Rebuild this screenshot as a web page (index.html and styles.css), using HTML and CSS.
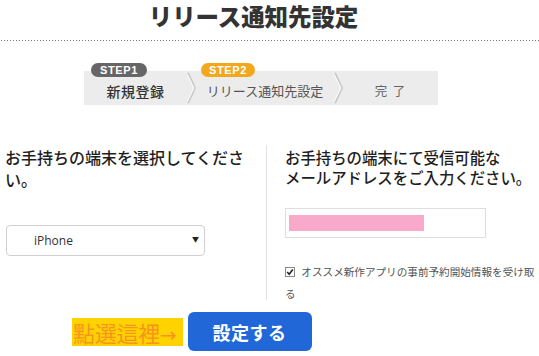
FILE: index.html
```html
<!DOCTYPE html>
<html lang="ja">
<head>
<meta charset="utf-8">
<link rel="stylesheet" href="styles.css">
</head>
<body>
<header class="page-head">
  <h1 class="title">リリース通知先設定</h1>
</header>

<div class="steps">
  <div class="step step-1">
    <span class="badge badge-dark">STEP1</span>
    <span class="step-label">新規登録</span>
  </div>
  <svg class="chev" width="10" height="34" viewBox="0 0 10 34"><polyline points="1,2 8,17 1,32" fill="none" stroke="#c8c8c8" stroke-width="2"/><polyline points="0,3 7,17 0,31" fill="none" stroke="#fff" stroke-width="1"/></svg>
  <div class="step step-2">
    <span class="badge badge-orange">STEP2</span>
    <span class="step-label">リリース通知先設定</span>
  </div>
  <svg class="chev chev-2" width="12" height="34" viewBox="0 0 12 34"><polyline points="2,2 9,17 2,32" fill="none" stroke="#c8c8c8" stroke-width="2"/><polyline points="1,3 8,17 1,31" fill="none" stroke="#fff" stroke-width="1"/></svg>
  <div class="step step-3">
    <span class="step-label">完&nbsp;&nbsp;了</span>
  </div>
</div>

<main class="cols">
  <section class="col col-left">
    <h2 class="col-head">お手持ちの端末を選択してください。</h2>
    <div class="select">
      <span class="select-text">iPhone</span>
      <span class="select-arrow">▼</span>
    </div>
  </section>
  <section class="col col-right">
    <h2 class="col-head col-head-right">お手持ちの端末にて受信可能な<br>メールアドレスをご入力ください。</h2>
    <div class="mail-input"><span class="mail-mask"></span></div>
    <p class="opt">
      <svg class="check" width="10" height="10" viewBox="0 0 10 10"><rect x="0.5" y="0.5" width="9" height="9" fill="#fff" stroke="#8a8a8a"/><polyline points="2.2,5 4.2,7.2 7.8,2.6" fill="none" stroke="#222" stroke-width="1.6"/></svg>
      オススメ新作アプリの事前予約開始情報を受け取る
    </p>
  </section>
</main>

<div class="actions">
  <span class="hint">點選這裡<span class="hint-arrow">→</span></span>
  <button class="submit">設定する</button>
</div>
</body>
</html>
```

FILE: styles.css
```css
html, body {
  margin: 0;
  padding: 0;
  background: #fff;
}

body {
  width: 539px;
  height: 356px;
  overflow: hidden;
  font-family: "Noto Sans CJK JP", "Noto Sans", sans-serif;
  color: #222;
}

.page-head {
  height: 40px;
  background-image: linear-gradient(to right, #777 0, #777 1px, transparent 1px);
  background-size: 3px 1px;
  background-repeat: repeat-x;
  background-position: 1px 40px;
  padding-bottom: 1px;
}

.title {
  margin: 0;
  text-align: center;
  font-size: 23.5px;
  line-height: 32px;
  font-weight: 900;
  color: #333;
  padding-right: 32px;
  letter-spacing: -0.1px;
}

.steps {
  margin: 30px 0 0 84px;
  width: 354px;
  height: 34px;
  display: flex;
  background: #ececec;
}

.step {
  position: relative;
  display: flex;
  align-items: center;
  justify-content: center;
  padding-top: 5px;
  box-sizing: border-box;
}

.step-1 { width: 103px; }
.step-2 { width: 136px; }
.step-3 { width: 93px; }

.chev { flex: none; display: block; }

.step-label {
  font-size: 13px;
  color: #555;
  white-space: nowrap;
}

.step-1 .step-label {
  font-size: 14px;
  color: #333;
  letter-spacing: 0.5px;
  font-weight: 500;
}

.step-3 .step-label {
  color: #666;
  padding-right: 3px;
  font-size: 12.5px;
}

.badge {
  position: absolute;
  top: -8px;
  height: 14px;
  border-radius: 7px;
  color: #fff;
  font-family: "Liberation Sans", Arial, sans-serif;
  font-weight: 700;
  font-size: 11px;
  line-height: 14px;
  text-align: center;
  letter-spacing: 0.6px;
}

.badge-dark {
  left: 7px;
  width: 56px;
  background: #666;
}

.badge-orange {
  left: 4px;
  width: 54px;
  background: #f2a71c;
}

.cols {
  margin-top: 40px;
  display: grid;
  grid-template-columns: 266px 1fr;
  height: 160px;
}

.col-left {
  padding: 0 15px 0 5px;
}

.col-right {
  border-left: 1px solid #e2e2e2;
  padding-left: 18px;
  height: 155px;
}

.col-head {
  margin: 1px 0 0;
  font-size: 16px;
  line-height: 22px;
  font-weight: 500;
  color: #1e1e1e;
}

.col-head-right {
  font-size: 15.4px;
  line-height: 20px;
  margin-top: 2px;
  white-space: nowrap;
}

.select {
  margin: 35px 0 0 1px;
  width: 199px;
  height: 31px;
  box-sizing: border-box;
  border: 1px solid #cfcfcf;
  border-radius: 4px;
  display: flex;
  align-items: center;
  justify-content: space-between;
  padding: 0 5px 0 27px;
  background: #fff;
}

.select-text {
  font-family: "Open Sans", sans-serif;
  font-size: 12px;
  color: #333;
}

.select-arrow {
  font-size: 7px;
  color: #222;
  margin-top: -3px;
}

.mail-input {
  margin-top: 21px;
  width: 201px;
  height: 30px;
  box-sizing: border-box;
  border: 1px solid #dedede;
  display: flex;
  align-items: center;
  padding-left: 3px;
}

.mail-mask {
  display: block;
  width: 135px;
  height: 16px;
  background: #f9aacb;
}

.opt {
  margin: 23px 0 0;
  font-size: 10.6px;
  line-height: 22px;
  color: #555;
}

.check {
  vertical-align: -1px;
  margin-right: 4px;
}

.actions {
  display: flex;
  align-items: center;
  gap: 5px;
  padding-left: 72px;
  margin-top: 7px;
}

.hint {
  background: #ffd200;
  color: #f7941d;
  font-family: "Noto Sans CJK TC", "Noto Sans CJK JP", sans-serif;
  font-size: 22px;
  line-height: 28px;
  height: 28px;
  padding: 0 6px 0 1px;
  white-space: nowrap;
  margin-top: 1px;
  letter-spacing: -0.3px;
}

.hint-arrow {
  font-family: "DejaVu Sans", sans-serif;
  font-size: 20px;
  letter-spacing: 0;
}

.submit {
  width: 124px;
  height: 39px;
  border: none;
  border-radius: 6px;
  background: #2267d8;
  color: #fff;
  font-family: "Noto Sans CJK JP", sans-serif;
  font-weight: 700;
  font-size: 18px;
  padding: 0;
  letter-spacing: 0.5px;
}
```
